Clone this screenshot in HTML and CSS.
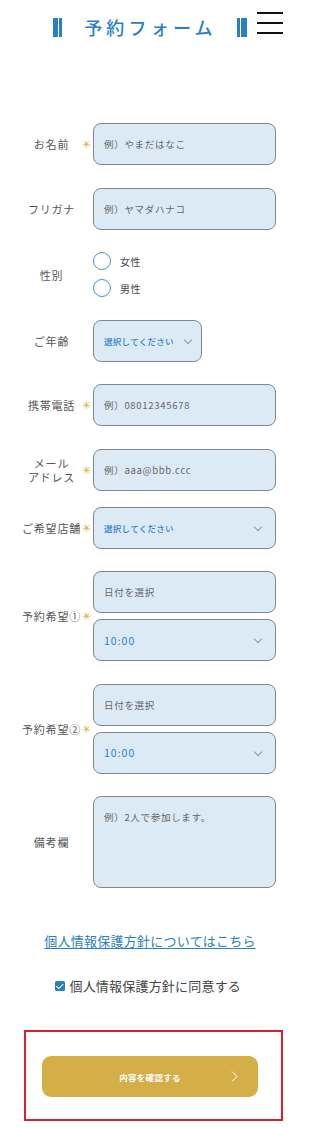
FILE: index.html
```html
<!DOCTYPE html>
<html lang="ja">
<head>
<meta charset="utf-8">
<title>予約フォーム</title>
<link rel="stylesheet" href="styles.css">
</head>
<body>
<header class="header">
  <h1 class="title"><span class="bar bar-l"></span><span class="title-text">予約フォーム</span><span class="bar bar-r"></span></h1>
  <button class="menu" type="button" aria-label="menu"><span></span><span></span><span></span></button>
</header>

<form class="form">
  <div class="row">
    <div class="label">お名前<span class="req">✳</span></div>
    <div class="field"><input class="input" type="text" placeholder="例）やまだはなこ"></div>
  </div>

  <div class="row">
    <div class="label">フリガナ</div>
    <div class="field"><input class="input" type="text" placeholder="例）ヤマダハナコ"></div>
  </div>

  <div class="row row-gender">
    <div class="label">性別</div>
    <div class="field radios">
      <label class="radio"><input type="radio" name="sex"><span>女性</span></label>
      <label class="radio"><input type="radio" name="sex"><span>男性</span></label>
    </div>
  </div>

  <div class="row">
    <div class="label">ご年齢</div>
    <div class="field"><div class="select select-short"><select><option>選択してください</option></select></div></div>
  </div>

  <div class="row">
    <div class="label">携帯電話<span class="req">✳</span></div>
    <div class="field"><input class="input" type="tel" placeholder="例）08012345678"></div>
  </div>

  <div class="row row-email">
    <div class="label label-2l">メール<br>アドレス<span class="req">✳</span></div>
    <div class="field"><input class="input" type="email" placeholder="例）aaa@bbb.ccc"></div>
  </div>

  <div class="row">
    <div class="label">ご希望店舗<span class="req">✳</span></div>
    <div class="field"><div class="select"><select><option>選択してください</option></select></div></div>
  </div>

  <div class="row">
    <div class="label">予約希望①<span class="req">✳</span></div>
    <div class="field stack">
      <input class="input" type="text" placeholder="日付を選択">
      <div class="select select-time"><select><option>10:00</option></select></div>
    </div>
  </div>

  <div class="row">
    <div class="label">予約希望②<span class="req">✳</span></div>
    <div class="field stack">
      <input class="input" type="text" placeholder="日付を選択">
      <div class="select select-time"><select><option>10:00</option></select></div>
    </div>
  </div>

  <div class="row row-last">
    <div class="label">備考欄</div>
    <div class="field"><textarea class="input textarea" placeholder="例）2人で参加します。"></textarea></div>
  </div>

  <p class="policy"><a href="#">個人情報保護方針についてはこちら</a></p>

  <label class="agree"><input type="checkbox" checked><span>個人情報保護方針に同意する</span></label>

  <div class="submit-box">
    <button class="submit" type="button">内容を確認する
      <svg class="submit-arrow" width="7" height="11" viewBox="0 0 7 11"><path d="M1 0.5 L6 5.5 L1 10.5" fill="none" stroke="#fff" stroke-width="1"/></svg>
    </button>
  </div>
</form>
</body>
</html>
```

FILE: styles.css
```css
* { box-sizing: border-box; }

html, body {
  margin: 0;
  padding: 0;
  background: #fff;
}

body {
  width: 300px;
  font-family: "Noto Sans CJK JP", "Noto Sans", sans-serif;
  color: #555;
}

.header {
  position: relative;
  height: 54px;
  display: flex;
  align-items: center;
  justify-content: center;
}

.title {
  margin: 0;
  display: flex;
  align-items: center;
  gap: 22px;
  font-size: 18px;
  font-weight: 500;
  color: #2a80c2;
  letter-spacing: 4.2px;
  line-height: 20px;
  padding-left: 0;
}

.title-text {
  margin-right: -2px;
}

.bar {
  display: block;
  width: 9px;
  height: 19px;
}

.bar-l {
  background: linear-gradient(to right, #2a80c2 0 5px, transparent 5px 6.5px, #2a80c2 6.5px 9px);
}

.bar-r {
  width: 10px;
  background: linear-gradient(to right, #2a80c2 0 2.5px, transparent 2.5px 4px, #2a80c2 4px 10px);
}

.menu {
  position: absolute;
  top: 12px;
  right: 17px;
  width: 26px;
  height: 21.5px;
  padding: 0;
  border: 0;
  background: transparent;
  display: flex;
  flex-direction: column;
  justify-content: space-between;
}

.menu span {
  display: block;
  height: 1.5px;
  width: 100%;
  background: #111;
}

.form {
  padding-top: 69px;
}

.row {
  display: flex;
  align-items: center;
  padding-left: 14px;
  margin-bottom: 22.5px;
}

.row-email { margin-bottom: 16px; }
.row-last { margin-bottom: 0; }

.label {
  position: relative;
  width: 75px;
  margin-right: 4px;
  flex: none;
  text-align: center;
  font-size: 11px;
  line-height: 14px;
  letter-spacing: 0.8px;
  color: #555;
}

.label-2l {
  line-height: 14px;
}

.req {
  position: absolute;
  right: -2px;
  top: 50%;
  height: 12px;
  margin-top: -6px;
  font-family: "DejaVu Sans", sans-serif;
  font-size: 10.5px;
  line-height: 12px;
  letter-spacing: 0;
  color: #d8aa30;
}

.field {
  width: 183px;
  flex: none;
}

.input,
.select select {
  display: block;
  width: 100%;
  height: 42px;
  margin: 0;
  padding: 0 10px;
  border: 1px solid #7f8890;
  border-radius: 8px;
  background: #dceaf5;
  font-family: "Noto Sans CJK JP", "Noto Sans", sans-serif;
  font-size: 9.5px;
  letter-spacing: 0.7px;
  color: #555;
  outline: none;
}

.input::placeholder {
  color: #666;
  opacity: 1;
}

.textarea {
  height: 92px;
  padding-top: 13px;
  line-height: 14px;
  resize: none;
}

.stack {
  display: flex;
  flex-direction: column;
  gap: 6px;
}

.select {
  position: relative;
}

.select select {
  appearance: none;
  -webkit-appearance: none;
  color: #2f80cc;
  font-size: 8.5px;
  font-weight: 500;
  letter-spacing: 0.3px;
}

.select::after {
  content: "";
  position: absolute;
  right: 15px;
  top: 50%;
  width: 5px;
  height: 5px;
  margin-top: -4px;
  border-right: 1px solid #999;
  border-bottom: 1px solid #999;
  transform: rotate(45deg);
  pointer-events: none;
}

.select-short {
  width: 109px;
}

.select-short::after {
  right: 11px;
}

.select-time select {
  font-size: 10.5px;
  font-weight: 400;
  letter-spacing: 1px;
}

.radios {
  display: flex;
  flex-direction: column;
  gap: 9px;
}

.radio {
  display: flex;
  align-items: center;
  gap: 9px;
  font-size: 10px;
  color: #444;
  letter-spacing: 0.5px;
}

.radio input {
  appearance: none;
  -webkit-appearance: none;
  margin: 0;
  width: 18px;
  height: 18px;
  border: 1.5px solid #4b92c9;
  border-radius: 50%;
  background: #fff;
}

.policy {
  margin: 43px 0 0;
  text-align: center;
  line-height: 20px;
  font-size: 13px;
  letter-spacing: 0.25px;
}

.policy a {
  color: #2a7fc0;
  text-decoration: underline;
  text-underline-offset: 2px;
}

.agree {
  display: flex;
  align-items: center;
  justify-content: center;
  gap: 4px;
  margin-top: 25px;
  line-height: 20px;
  font-size: 13px;
  letter-spacing: 0.2px;
  color: #444;
  padding-right: 4px;
}

.agree input {
  appearance: none;
  -webkit-appearance: none;
  margin: 0;
  width: 10.5px;
  height: 10.5px;
  border-radius: 1.5px;
  background: #2a7fc0;
  position: relative;
}

.agree input::after {
  content: "";
  position: absolute;
  left: 3.3px;
  top: 1px;
  width: 3px;
  height: 5.5px;
  border-right: 1.5px solid #fff;
  border-bottom: 1.5px solid #fff;
  transform: rotate(45deg);
}

.submit-box {
  margin: 34px 0 0 24px;
  width: 259px;
  height: 91px;
  border: 2px solid #d8222a;
  padding: 24px 0 0 16px;
}

.submit {
  position: relative;
  display: flex;
  align-items: center;
  justify-content: center;
  width: 216px;
  height: 41px;
  border: 0;
  border-radius: 9px;
  background: #d4ae46;
  color: #fff;
  font-family: "Noto Sans CJK JP", "Noto Sans", sans-serif;
  font-size: 8.5px;
  font-weight: 700;
  letter-spacing: 0.3px;
  padding: 0;
}

.submit-arrow {
  position: absolute;
  right: 20px;
  top: 15px;
}
```
